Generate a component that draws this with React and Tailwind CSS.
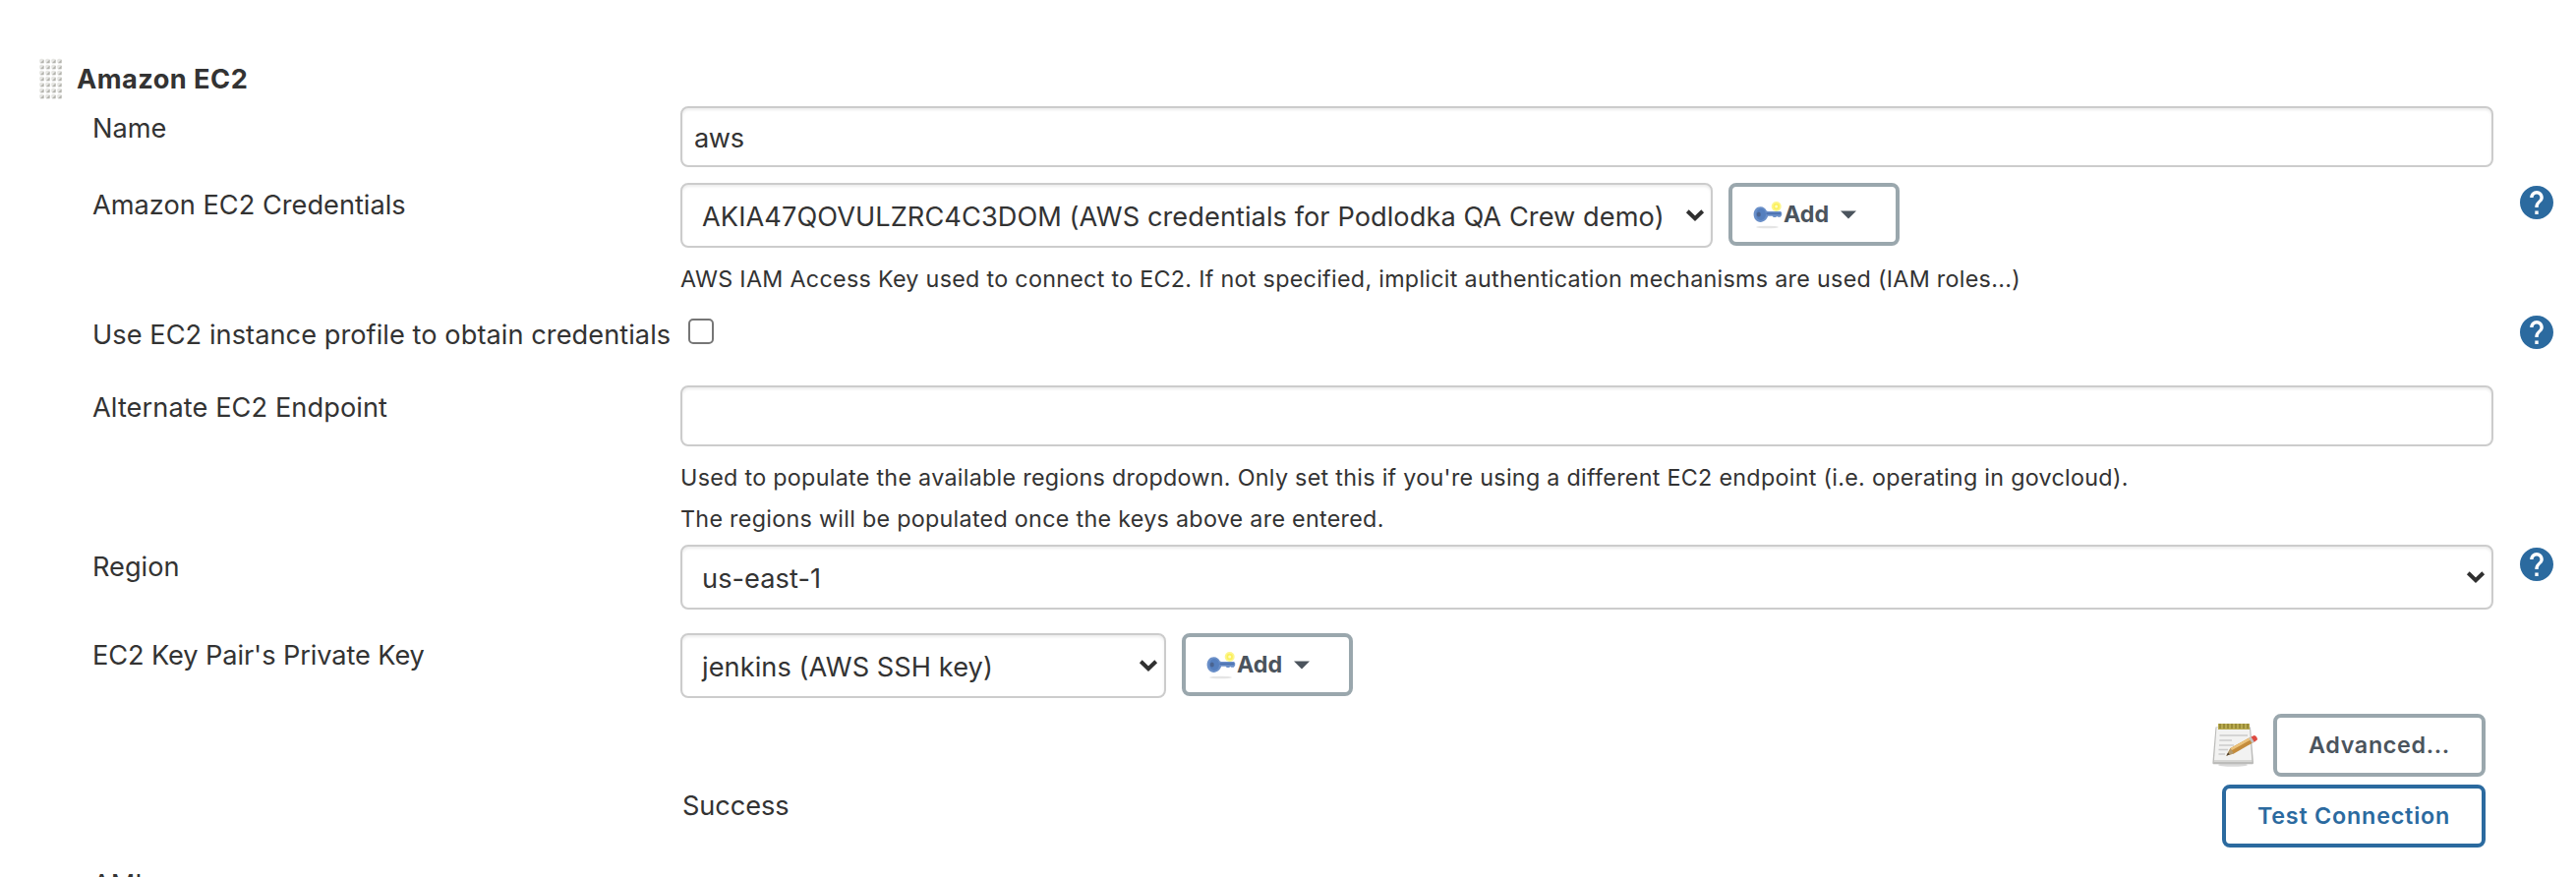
const GripHandle = () => {
  const rows = [0, 1, 2, 3, 4, 5, 6];
  const cols = [0, 1, 2, 3];
  return (
    <svg width="24" height="44" viewBox="0 0 24 44" className="shrink-0">
      {rows.map((r) =>
        cols.map((c) => (
          <g key={`${r}-${c}`}>
            <rect x={c * 6 + 0.2} y={r * 6 + 0.8} width="4.4" height="4.4" rx="1.5" fill="#e6e6e3" />
            <path d={`M${c * 6 + 4.6} ${r * 6 + 1.4}v3.8h-3.800z`} fill="#b4b4ae" />
          </g>
        ))
      )}
    </svg>
  );
};

const HelpIcon = () => (
  <svg width="34" height="34" viewBox="2 2 20 20" className="shrink-0">
    <path
      fill="#2b6a9f"
      d="M12 2C6.480 2 2 6.480 2 12s4.480 10 10 10 10-4.480 10-10S17.520 2 12 2zm1 17h-2v-2h2v2zm2.070-7.750l-.9.920C13.450 12.900 13 13.500 13 15h-2v-.5c0-1.100.450-2.100 1.170-2.830l1.240-1.260c.370-.360.590-.860.590-1.410 0-1.100-.9-2-2-2s-2 .9-2 2H8c0-2.210 1.790-4 4-4s4 1.790 4 4c0 .880-.360 1.680-.930 2.250z"
    />
  </svg>
);

const Chevron = () => (
  <svg width="20" height="14" viewBox="0 0 20 14" className="shrink-0">
    <path d="M2.300 2.800L10 10.200l7.700-7.400" fill="none" stroke="#303030" strokeWidth="4" />
  </svg>
);

const KeyIcon = () => (
  <svg width="32" height="32" viewBox="0 0 32 32" className="shrink-0">
    <ellipse cx="15.500" cy="29" rx="11.500" ry="1.300" fill="#000" opacity="0.100" />
    <circle cx="24.700" cy="8" r="5" fill="#fdf68c" />
    <circle cx="24.700" cy="8" r="3.200" fill="#fbf05c" />
    <circle cx="24.700" cy="8" r="1.500" fill="#fffcc0" />
    <path
      d="M8.600 8.200c2.800 0 5.200 1.700 6.200 4.300l1.400.6H29l1.200 1.200v2.500l-1.400 2h-2.400l-1-.9-1.400 1h-2.200l-1.200-1.100h-4.400c-1.200 3.300-3.900 6.100-7.600 6.100-4.200 0-7-3.500-7-7.900s2.800-7.800 7-7.800z"
      fill="#6a8fc8"
    />
    <path d="M14.500 14.500H29v1.600H14.500z" fill="#4a6fae" />
    <ellipse cx="9" cy="16" rx="5" ry="6" fill="#557fbe" />
    <ellipse cx="6.800" cy="16" rx="2" ry="2.600" fill="#4a6490" />
  </svg>
);

const NotepadIcon = () => (
  <svg width="48" height="48" viewBox="0 0 48 48" className="shrink-0">
    <ellipse cx="21" cy="45" rx="15" ry="1.800" fill="#000" opacity="0.150" />
    <path d="M3.500 6.500h35.500l3 36c.1 1.300-.4 1.800-1.600 1.800H2c-1.300 0-1.800-.6-1.600-1.800z" fill="#bcbcba" />
    <path d="M4.500 7h33.500l2.200 33H2z" fill="#f2f2f1" />
    <path d="M2 40h38.200l.3 2H1.800z" fill="#d6d6d4" />
    <path d="M6 3h32v6H6z" fill="#b9ab50" />
    <path d="M8 3v5M12 3v5M16 3v5M20 3v5M24 3v5M28 3v5M32 3v5M36 3v5" stroke="#8f8130" strokeWidth="1.500" />
    <path d="M7.500 15H36M7.300 20H20M7 25h15M6.500 29.500H16M6.500 34H13" stroke="#cbcbcb" strokeWidth="1.600" />
    <path d="M14.500 35.500l4-7.500L39 16.800l3.500 5L22 33.500z" fill="#c48c3c" />
    <path d="M18.500 28L39 16.800l1.400 2-20.700 11.400z" fill="#ebc27a" />
    <path d="M14.500 35.500l4-7.500 3.500 5.500z" fill="#b39a6e" />
    <path d="M14.300 35.800l1.900-3.500 1.500 2.200z" fill="#4d4030" />
    <path d="M37.200 17.800l2.800-1.600 3.400 5-2.800 1.700z" fill="#c4c4c4" />
    <path d="M39.600 16.400l3-1.300c1.500-.4 4 3 3.200 4.300l-3 2.300z" fill="#de4b42" />
  </svg>
);

const Row = ({ className, label, labelClass, help, helpClass, children }) => (
  <div className={`flex shrink-0 items-start ${className}`}>
    <div className={`w-[692px] shrink-0 whitespace-nowrap pl-[94px] leading-8 ${labelClass || ""}`}>{label}</div>
    <div className="w-[1844px] shrink-0">{children}</div>
    {help && (
      <div className={`ml-[27px] ${helpClass}`}>
        <HelpIcon />
      </div>
    )}
  </div>
);

const FIELD = "rounded-[8px] border-2 border-[#cccccc] bg-white shadow-[inset_0_2px_3px_rgba(0,0,0,0.075)]";

const TextInput = ({ value }) => (
  <div className={`flex h-[62px] w-full items-center pl-3 ${FIELD}`}>
    <span className="pt-[3px] leading-8 tracking-[-0.4px]">{value}</span>
  </div>
);

const Select = ({ value, width }) => (
  <div className={`flex h-[66px] items-center justify-between pl-5 pr-[6px] ${FIELD} ${width}`}>
    <span className="whitespace-nowrap pt-[3px] leading-8 tracking-[0.06px]">{value}</span>
    <Chevron />
  </div>
);

const BUTTON =
  "flex h-16 items-center whitespace-nowrap rounded-[8px] border-4 bg-white text-[23.3px] font-semibold leading-8";

const AddButton = () => (
  <div className={`w-[174px] border-[#9aa7ad] pl-5 text-[#4b545d] ${BUTTON}`}>
    <KeyIcon />
    <span className="font-bold">Add</span>
    <svg width="16" height="9" viewBox="0 0 16 9" className="ml-3">
      <path d="M0 0.500h16l-8 8z" fill="#4b545d" />
    </svg>
  </div>
);

const HelpText = ({ children }) => (
  <div className="whitespace-nowrap text-[23.3px] leading-[42px] tracking-[0.29px]">{children}</div>
);

export default function App() {
  return (
    <div className="flex h-[892px] w-[2620px] flex-col overflow-hidden bg-white font-['Inter','Liberation_Sans',sans-serif] text-[27.2px] text-[#333333]">
      <div className="flex h-[108px] shrink-0 items-start pl-10 pt-[59px]">
        <GripHandle />
        <div className="pl-[14px] pt-[6px] font-bold leading-8 tracking-[0.45px]">Amazon EC2</div>
      </div>

      <Row className="h-[78px]" label="Name" labelClass="pt-[7px]">
        <TextInput value="aws" />
      </Row>

      <Row className="h-[130px]" label="Amazon EC2 Credentials" labelClass="pt-[7px]" help helpClass="pt-[3px]">
        <div className="flex gap-4">
          <Select value="AKIA47QOVULZRC4C3DOM (AWS credentials for Podlodka QA Crew demo)" width="w-[1050px]" />
          <AddButton />
        </div>
        <div className="pt-[11px]">
          <HelpText>
            AWS IAM Access Key used to connect to EC2. If not specified, implicit authentication mechanisms are used
            (IAM roles...)
          </HelpText>
        </div>
      </Row>

      <Row
        className="h-[76px]"
        label="Use EC2 instance profile to obtain credentials"
        labelClass="pt-[9px] tracking-[0.05px]"
        help
        helpClass="pt-[5px]"
      >
        <div className="pl-2 pt-2">
          <div className="size-[26px] rounded-[5px] border-2 border-[#767676] bg-white" />
        </div>
      </Row>

      <Row className="h-[162px]" label="Alternate EC2 Endpoint" labelClass="pt-[7px] tracking-[0.08px]">
        <TextInput value="" />
        <div className="pt-[11px]">
          <HelpText>
            Used to populate the available regions dropdown. Only set this if you're using a different EC2 endpoint
            (i.e. operating in govcloud).
          </HelpText>
          <HelpText>The regions will be populated once the keys above are entered.</HelpText>
        </div>
      </Row>

      <Row className="h-[90px]" label="Region" labelClass="pt-[7px]" help helpClass="pt-[3px]">
        <Select value="us-east-1" width="w-full" />
      </Row>

      <Row className="h-[82px]" label="EC2 Key Pair's Private Key" labelClass="pt-[7px] tracking-[-0.1px]">
        <div className="flex gap-4">
          <Select value="jenkins (AWS SSH key)" width="w-[494px]" />
          <AddButton />
        </div>
      </Row>

      <div className="flex h-[72px] shrink-0 items-start justify-end pr-[92px]">
        <div className="pr-[14px] pt-[7px]">
          <NotepadIcon />
        </div>
        <div className={`w-[216px] justify-center border-[#9aa7ad] tracking-[0.65px] text-[#4b545d] ${BUTTON}`}>
          Advanced...
        </div>
      </div>

      <div className="flex h-[86px] shrink-0 items-start justify-between pl-[694px] pr-[92px]">
        <div className="pt-[6px] leading-8 tracking-[-0.1px]">Success</div>
        <div className={`w-[268px] justify-center border-[#2b6a9f] tracking-[0.8px] text-[#2b6a9f] ${BUTTON}`}>
          Test Connection
        </div>
      </div>

      <div className="shrink-0 pl-[94px] leading-8">AMIs</div>
    </div>
  );
}
